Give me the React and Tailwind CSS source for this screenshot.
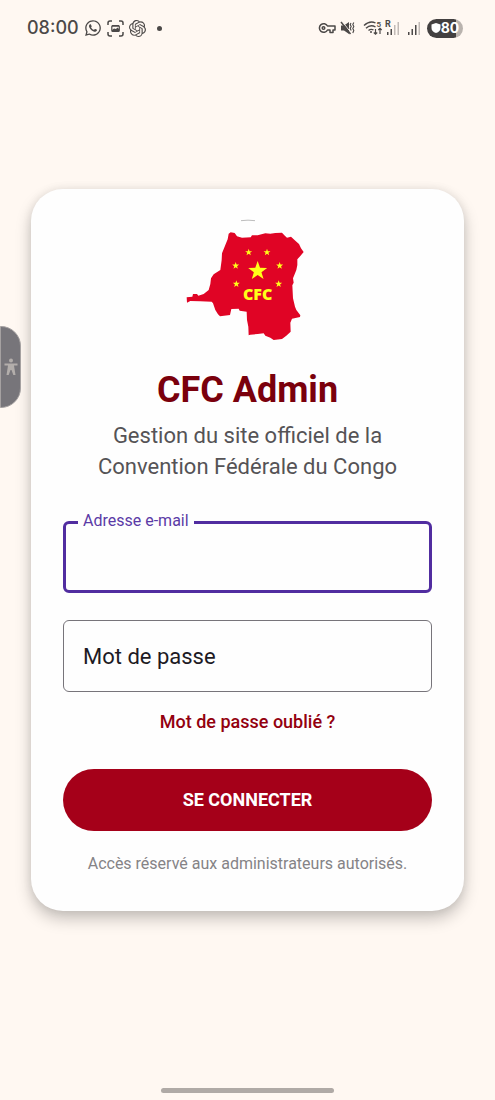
import { useState } from "react"
import { FaWhatsapp } from "react-icons/fa"
import { SiOpenai } from "react-icons/si"

const STARS = [
  { x: 235, y: 127, r: 11 },
  { x: 290, y: 127, r: 11 },
  { x: 196, y: 167, r: 11 },
  { x: 328, y: 167, r: 11 },
  { x: 198, y: 222, r: 11 },
  { x: 325, y: 222, r: 11 },
  { x: 262, y: 183, r: 30 },
]

function starPoints({ x, y, r }) {
  return Array.from({ length: 10 }, (_, i) => {
    const radius = i % 2 === 0 ? r : r * 0.4
    const angle = (Math.PI / 5) * i - Math.PI / 2
    return `${(x + radius * Math.cos(angle)).toFixed(1)},${(y + radius * Math.sin(angle)).toFixed(1)}`
  }).join(" ")
}

function Logo() {
  return (
    <svg viewBox="8 21 450 393" className="w-[150px] h-[131px]" role="img" aria-label="CFC">
      <path d="M212 32q21-3 42 0" fill="none" stroke="#bdbdbd" strokeWidth="3" />
      <path
        fill="#e00425"
        d="M175 71L181 67L193 69L200 79L215 83L241 82L245 76L262 76L285 70L300 71L315 69L335 68L342 76L350 83L362 80L375 92L386 102L392 115L400 126L390 138L381 148L381 165L378 180L372 195L368 205L370 218L366 226L368 265L374 290L378 300L390 316L389 321L365 326L360 338L361 365L348 377L335 387L310 390L300 383L285 377L280 370L262 372L240 374L235 376L234 350L230 330L229 305L208 302L205 296L183 297L179 315L149 319L143 313L135 300L128 280L124 275L90 274L60 273L50 278L49 262L66 260L68 252L80 252L84 257L100 252L115 240L120 222L122 205L130 193L150 180L154 150L155 130L165 105L172 88Z"
      />
      {STARS.map((star) => (
        <polygon key={`${star.x}-${star.y}`} points={starPoints(star)} fill="#ffff19" />
      ))}
      <text
        x="262"
        y="271"
        textAnchor="middle"
        fill="#ffff19"
        fontSize="48"
        fontWeight="800"
        fontFamily="'Open Sans', 'Noto Sans', sans-serif"
      >
        CFC
      </text>
    </svg>
  )
}

function ScreenshotIcon() {
  return (
    <svg viewBox="0 0 17 17" className="size-[17px]" fill="none" stroke="currentColor" strokeWidth="1.5">
      <path d="M1 5V3a2 2 0 0 1 2-2h2M12 1h2a2 2 0 0 1 2 2v2M16 12v2a2 2 0 0 1-2 2h-2M5 16H3a2 2 0 0 1-2-2v-2" />
      <rect x="4.8" y="5.5" width="7.5" height="6" rx="1" strokeWidth="1.200" />
      <path d="M5 10l2-1.500 2 .500 1.500-1.500L12 9v2.500H5z" fill="currentColor" stroke="none" />
      <path d="M5 6h7" />
    </svg>
  )
}

function KeyIcon() {
  return (
    <svg viewBox="0 0 18 12" className="w-[18px] h-3" fill="none" stroke="currentColor" strokeWidth="1.500">
      <path d="M9.500 4a4.300 4.300 0 1 0 0 4H12v2.500h3V8h2V4z" strokeLinejoin="round" />
      <circle cx="5.500" cy="6" r="1.300" />
    </svg>
  )
}

function MuteIcon() {
  return (
    <svg viewBox="0 0 15 14" className="w-[15px] h-3.5" fill="none" stroke="currentColor" strokeWidth="1.300">
      <path d="M1 4.500h3L9 1v12L4 9.500H1z" fill="currentColor" stroke="none" />
      <path d="M2 .500l9 11" stroke="#fff8f2" strokeWidth="1" />
      <path d="M1 1l9.500 12" strokeWidth="1.500" />
      <path d="M11 2l-.800 1.500 1 2-1 2 1 2M13.800 1.500l-1 2 1 2-1 2 1 2-1 2.500" strokeWidth="1.100" />
    </svg>
  )
}

function WifiIcon() {
  return (
    <svg viewBox="0 0 20 16" className="w-5 h-4" fill="none" stroke="currentColor" strokeWidth="1.400">
      <path d="M1 5.500Q7 0 12.500 3M3 8.200Q7.500 4 12.500 7M5.500 10.500Q8 8.500 10.500 10" />
      <circle cx="8" cy="12" r="1" fill="currentColor" stroke="none" />
      <path d="M12.500 9v5M10.800 12.500l1.700 1.700 1.700-1.700M17 14V8.500M15.300 10l1.700-1.700 1.700 1.700" strokeWidth="1.200" />
      <text x="13.500" y="7" fontSize="8" fontWeight="600" fontFamily="Roboto, sans-serif" fill="currentColor" stroke="none">
        5
      </text>
    </svg>
  )
}

function SignalIcon({ roaming }) {
  return (
    <svg viewBox="0 0 15 16" className="w-[15px] h-4" fill="currentColor">
      {roaming && (
        <text x="0" y="7" fontSize="9" fontWeight="700" fontFamily="Roboto, sans-serif">
          R
        </text>
      )}
      <rect x="2" y="12" width="1.500" height="3" />
      <rect x="5.500" y="9" width="1.500" height="6" />
      <rect x="9" y="5" width="1.500" height="10" opacity={roaming ? 0.35 : 1} />
      <rect x="12.500" y="2" width="1.500" height="13" opacity="0.350" />
    </svg>
  )
}

function Battery() {
  return (
    <div className="flex items-center justify-center w-9 h-[19px] rounded-full bg-linear-to-r from-[#434040] from-80% to-[#b9b3ae] to-80% text-white">
      <svg viewBox="0 0 10 10" className="size-2.5" fill="currentColor">
        <path d="M5 0l4.500 1.500V5Q9.500 8.500 5 10 .500 8.500.500 5V1.500z" />
      </svg>
      <span className="text-sm leading-none font-bold">80</span>
    </div>
  )
}

function StatusBar() {
  return (
    <header className="flex items-center justify-between h-14 pl-[27px] pr-8 font-[Inter,sans-serif] text-[#4c4948]">
      <div className="flex items-center gap-[5px]">
        <span className="text-lg leading-none font-medium">08:00</span>
        <FaWhatsapp className="size-[18px]" />
        <ScreenshotIcon />
        <SiOpenai className="size-[17px]" />
        <span className="ml-1.5 size-[5px] rounded-full bg-current" />
      </div>
      <div className="flex items-center gap-1">
        <KeyIcon />
        <MuteIcon />
        <span className="flex ml-1">
          <WifiIcon />
        </span>
        <div className="flex items-center gap-1.5 -ml-0.5 mr-0.5">
          <SignalIcon roaming />
          <SignalIcon />
        </div>
        <Battery />
      </div>
    </header>
  )
}

export default function App() {
  const [email, setEmail] = useState("")
  const [password, setPassword] = useState("")

  return (
    <div className="relative flex flex-col min-h-screen bg-[#fff8f2] font-[Roboto,sans-serif]">
      <StatusBar />

      <main className="flex flex-1 items-center justify-center px-[31px]">
        <form
          className="flex flex-col items-center w-full max-w-md px-8 pt-7 pb-[35px] bg-[#fefefe] rounded-[32px] shadow-[0_8px_16px_rgba(0,0,0,0.22),0_0_10px_rgba(0,0,0,0.08)]"
          onSubmit={(e) => e.preventDefault()}
        >
          <Logo />
          <h1 className="mt-5 text-4xl leading-11 font-bold text-[#7a000c]">CFC Admin</h1>
          <p className="mt-2 text-[22px] leading-[31px] text-center text-[#555356]">
            Gestion du site officiel de la
            <br />
            Convention Fédérale du Congo
          </p>

          {/* Email */}
          <div className="relative w-full mt-[39px]">
            <input
              id="email"
              type="email"
              value={email}
              onChange={(e) => setEmail(e.target.value)}
              className="block w-full h-18 px-5 text-[22px] border-[3px] border-[#512da0] rounded-md outline-none"
            />
            <label
              htmlFor="email"
              className="absolute left-[15px] -top-2.5 px-[5px] bg-[#fefefe] text-base leading-5 text-[#5b3aa6]"
            >
              Adresse e-mail
            </label>
          </div>

          {/* Password */}
          <div className="relative w-full mt-[27px]">
            <input
              id="password"
              type="password"
              value={password}
              onChange={(e) => setPassword(e.target.value)}
              className="block w-full h-18 px-5 text-[22px] border border-[#77747a] rounded-md outline-none"
            />
            {!password && (
              <label
                htmlFor="password"
                className="absolute left-5 inset-y-0 flex items-center text-[22px] text-[#1d1a24] pointer-events-none"
              >
                Mot de passe
              </label>
            )}
          </div>

          <a href="#" className="mt-[18px] text-lg leading-6 font-medium text-[#93000f]">
            Mot de passe oublié ?
          </a>

          <button
            type="submit"
            className="w-full h-[62px] mt-[35px] rounded-full bg-[#a50019] text-lg font-bold text-white"
          >
            SE CONNECTER
          </button>

          <p className="mt-[21px] text-base leading-6 text-center text-[#858386]">
            Accès réservé aux administrateurs autorisés.
          </p>
        </form>
      </main>

      <footer className="flex items-end justify-center h-14 pb-[7px]">
        <div className="w-[35%] h-[5px] rounded-full bg-[#b0aaa6]" />
      </footer>

      {/* Accessibility handle docked on the screen edge */}
      <button
        type="button"
        aria-label="Accessibilité"
        className="absolute left-0 top-[326px] flex items-center justify-center w-[21px] h-[82px] rounded-r-[20px] border border-[#a5a1a1] bg-[#77757a] text-[#b3aeab]"
      >
        <svg viewBox="0 0 14 18" className="w-3.5 h-[18px] shrink-0" fill="currentColor">
          <circle cx="7" cy="2.500" r="2" />
          <path d="M.500 5.500h13v2H10L11.500 17H9.300L7.500 12h-1L4.700 17H2.500L4 7.500H.500z" />
        </svg>
      </button>
    </div>
  )
}
